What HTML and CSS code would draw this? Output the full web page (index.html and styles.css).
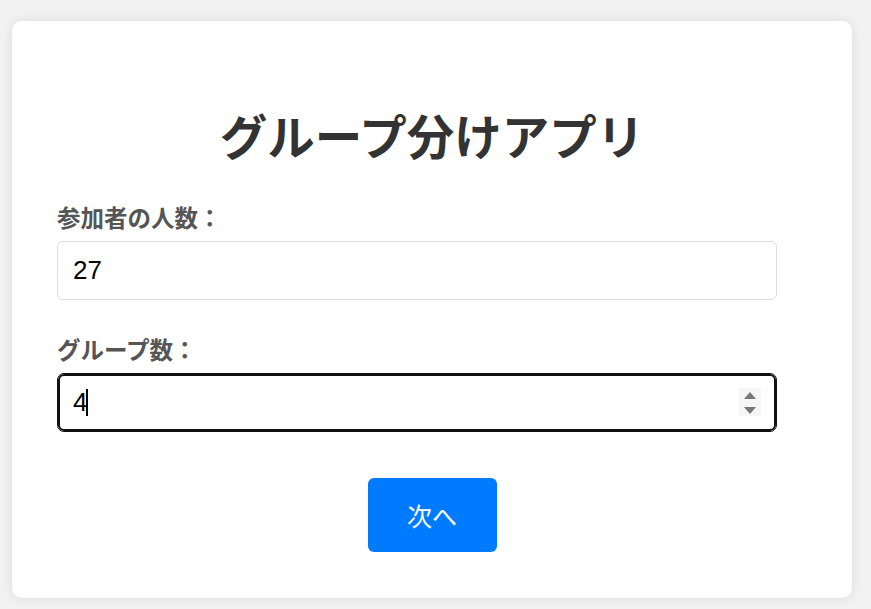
FILE: index.html
```html
<!DOCTYPE html>
<html lang="ja">
<head>
<meta charset="utf-8">
<title>グループ分けアプリ</title>
<link rel="stylesheet" href="styles.css">
</head>
<body>
<main class="card">
  <h1 class="title">グループ分けアプリ</h1>
  <label class="label" for="people">参加者の人数：</label>
  <div class="field">
    <input id="people" class="input" type="text" value="27" readonly>
  </div>
  <label class="label label-second" for="groups">グループ数：</label>
  <div class="field">
    <input id="groups" class="input input-focused" type="text" value="4" readonly>
    <span class="caret"></span>
    <span class="spinner">
      <svg width="22" height="28" viewBox="0 0 22 28">
        <path d="M5 11 L11 4 L17 11 Z" fill="#777"/>
        <path d="M5 19 L17 19 L11 26 Z" fill="#777"/>
      </svg>
    </span>
  </div>
  <div class="actions">
    <button class="button" type="button">次へ</button>
  </div>
</main>
</body>
</html>
```

FILE: styles.css
```css
html, body {
  margin: 0;
  padding: 0;
}

body {
  background: #f2f2f2;
  font-family: "Liberation Sans", "Noto Sans CJK JP", sans-serif;
  width: 871px;
  height: 609px;
  overflow: hidden;
}

.card {
  box-sizing: border-box;
  width: 840px;
  margin: 21px 0 0 12px;
  padding: 0 45px 46px;
  background: #fff;
  border-radius: 10px;
  box-shadow: 0 0 12px rgba(0, 0, 0, 0.1);
  display: flex;
  flex-direction: column;
}

.title {
  margin: 86px 0 0;
  font-family: "Noto Sans CJK JP", sans-serif;
  font-size: 47.5px;
  line-height: 56px;
  font-weight: 700;
  color: #333;
  text-align: center;
}

.label {
  display: block;
  margin-top: 40px;
  font-family: "Noto Sans CJK JP", sans-serif;
  font-size: 23.5px;
  line-height: 29px;
  font-weight: 700;
  color: #555;
}

.label-second {
  margin-top: 35px;
}

.field {
  position: relative;
  width: 720px;
  margin-top: 9px;
}

.input {
  box-sizing: border-box;
  display: block;
  width: 720px;
  height: 59px;
  padding: 0 15px;
  border: 1px solid #ddd;
  border-radius: 6px;
  background: #fff;
  font-family: "Liberation Sans", sans-serif;
  font-size: 26px;
  color: #000;
  outline: none;
}

.input-focused {
  border-color: #111;
  border-radius: 7px;
  outline: 2px solid #111;
  outline-offset: -3px;
}

.caret {
  position: absolute;
  left: 29px;
  top: 16px;
  width: 1.5px;
  height: 27px;
  background: #000;
}

.spinner {
  position: absolute;
  right: 16px;
  top: 15px;
  width: 22px;
  height: 28px;
  background: #f6f6f6;
  display: flex;
}

.actions {
  display: flex;
  justify-content: center;
  margin-top: 46px;
}

.button {
  width: 129px;
  height: 74px;
  border: none;
  border-radius: 6px;
  background: #007bff;
  color: #fff;
  font-family: "Noto Sans CJK JP", sans-serif;
  font-size: 25px;
  cursor: pointer;
}
```
